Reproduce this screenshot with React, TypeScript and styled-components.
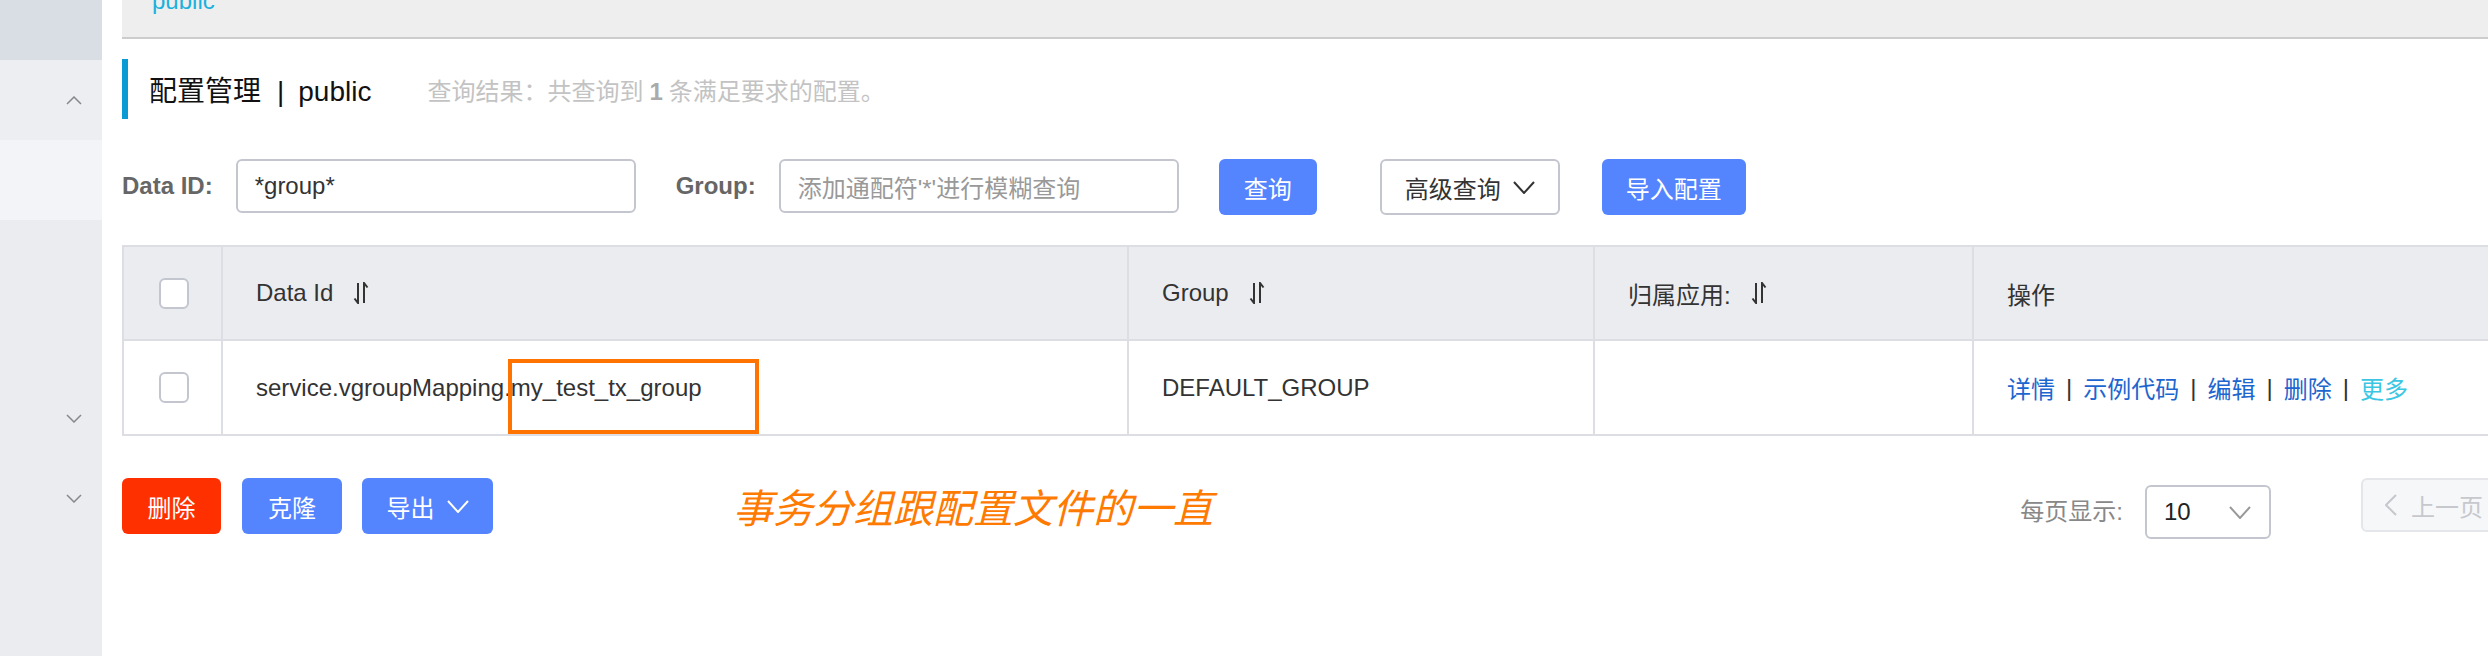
import React from 'react';
import styled, { createGlobalStyle } from 'styled-components';

const GlobalStyle = createGlobalStyle`
  html, body {
    margin: 0;
    padding: 0;
    background: #fff;
    overflow: hidden;
  }
  body {
    font-family: "Liberation Sans", "Noto Sans CJK SC", sans-serif;
    color: #333;
  }
`;

const Page = styled.div`
  display: flex;
  width: 2488px;
  height: 656px;
  overflow: hidden;
`;

const Sidebar = styled.div`
  width: 102px;
  flex-shrink: 0;
  display: flex;
  flex-direction: column;
  background: #ebecf0;
`;

const SideItem = styled.div<{ $h: number; $bg?: string }>`
  height: ${p => p.$h}px;
  background: ${p => p.$bg || 'transparent'};
  display: flex;
  align-items: center;
  justify-content: flex-end;
  padding-right: 20px;
`;

const Main = styled.div`
  width: 2727px;
  flex-shrink: 0;
  padding-left: 20px;
`;

const Crumbs = styled.div`
  height: 37px;
  background: #eeeeee;
  border-bottom: 2px solid #cccccc;
  overflow: hidden;
  padding-left: 30px;
`;

const CrumbText = styled.span`
  display: block;
  margin-top: -11px;
  font-size: 24px;
  line-height: 24px;
  color: #1bb1dc;
`;

const TitleBlock = styled.div`
  margin-top: 20px;
  height: 60px;
  border-left: 6px solid #0a9bd4;
  padding-left: 21px;
  display: flex;
  align-items: center;
`;

const Title = styled.span`
  font-size: 28px;
  color: #111;
`;

const Pipe = styled.span`
  margin: 0 14px 0 16px;
`;

const Result = styled.span`
  margin-left: 56px;
  font-size: 24px;
  color: #c3c3c3;

  b {
    color: #aaa;
    margin: 0 6px;
  }
`;

const SearchRow = styled.div`
  margin-top: 40px;
  display: flex;
  align-items: flex-start;
  height: 56px;
`;

const Label = styled.span<{ $gap?: number }>`
  margin-left: ${p => p.$gap || 0}px;
  margin-right: 23px;
  height: 54px;
  line-height: 54px;
  font-size: 24px;
  font-weight: bold;
  color: #666;
`;

const Input = styled.div<{ $placeholder?: boolean }>`
  box-sizing: border-box;
  width: 400px;
  height: 54px;
  border: 2px solid #c4c6cf;
  border-radius: 6px;
  padding: 0 17px;
  display: flex;
  align-items: center;
  font-size: 24px;
  color: ${p => (p.$placeholder ? '#999' : '#333')};
`;

const Button = styled.div<{ $kind?: 'primary' | 'normal' | 'danger'; $w: number; $gap?: number }>`
  box-sizing: border-box;
  width: ${p => p.$w}px;
  height: 56px;
  margin-left: ${p => p.$gap || 0}px;
  border-radius: 6px;
  display: flex;
  align-items: center;
  justify-content: center;
  gap: 12px;
  font-size: 24px;
  background: ${p => (p.$kind === 'danger' ? '#ff3000' : p.$kind === 'normal' ? '#fff' : '#5584ff')};
  color: ${p => (p.$kind === 'normal' ? '#333' : '#fff')};
  border: ${p => (p.$kind === 'normal' ? '2px solid #c4c6cf' : 'none')};
`;

const Table = styled.div`
  margin-top: 30px;
  display: grid;
  grid-template-columns: 99px 906px 466px 379px 875px;
  border-top: 2px solid #dcdee3;
  border-left: 2px solid #dcdee3;
`;

const Cell = styled.div<{ $head?: boolean; $center?: boolean }>`
  box-sizing: border-box;
  position: relative;
  height: ${p => (p.$head ? 94 : 95)}px;
  border-right: 2px solid #dcdee3;
  border-bottom: 2px solid #dcdee3;
  background: ${p => (p.$head ? '#ebecf0' : '#fff')};
  display: flex;
  align-items: center;
  justify-content: ${p => (p.$center ? 'center' : 'flex-start')};
  padding-left: ${p => (p.$center ? 0 : 33)}px;
  font-size: 24px;
  color: #333;
  gap: 20px;
`;

const Checkbox = styled.div`
  box-sizing: border-box;
  width: 30px;
  height: 31px;
  border: 2px solid #c4c6cf;
  border-radius: 6px;
  background: #fff;
  margin-left: 3px;
`;

const Marker = styled.div`
  position: absolute;
  left: 285px;
  top: 18px;
  width: 251px;
  height: 75px;
  box-sizing: border-box;
  border: 4px solid #ff7300;
`;

const Links = styled.div`
  display: flex;
  align-items: center;
  font-size: 24px;
`;

const Link = styled.span<{ $more?: boolean }>`
  color: ${p => (p.$more ? '#3bc6e3' : '#1d66cf')};
`;

const Sep = styled.span`
  color: #333;
  margin: 0 11px;
`;

const BottomRow = styled.div`
  margin-top: 42px;
  display: flex;
  align-items: flex-start;
`;

const Note = styled.span`
  margin-left: 240px;
  margin-top: 3px;
  font-size: 40px;
  line-height: 50px;
  font-style: italic;
  color: #ff7a00;
  font-family: "Noto Sans CJK SC", sans-serif;
`;

const Pager = styled.div`
  margin-left: auto;
  display: flex;
  align-items: flex-start;
`;

const PagerLabel = styled.span`
  margin-top: 7px;
  height: 54px;
  line-height: 54px;
  font-size: 24px;
  color: #888;
  margin-right: 22px;
`;

const Select = styled.div`
  box-sizing: border-box;
  margin-top: 7px;
  width: 126px;
  height: 54px;
  border: 2px solid #c4c6cf;
  border-radius: 6px;
  padding: 0 18px 0 17px;
  display: flex;
  align-items: center;
  justify-content: space-between;
  font-size: 24px;
  color: #222;
`;

const PageButton = styled.div<{ $w: number; $gap: number }>`
  box-sizing: border-box;
  width: ${p => p.$w}px;
  height: 54px;
  margin-left: ${p => p.$gap}px;
  border: 2px solid #e4e6ea;
  border-radius: 6px;
  background: #f6f7f9;
  display: flex;
  align-items: center;
  justify-content: flex-start;
  padding-left: 22px;
  gap: 14px;
  font-size: 24px;
  color: #c6c8cd;
`;

const Chevron: React.FC<{ dir: 'up' | 'down' | 'left' | 'right'; color?: string; w?: number; h?: number; sw?: number }> = ({
  dir,
  color = '#888',
  w = 16,
  h = 9,
  sw = 1.5,
}) => {
  const pts: Record<string, string> = {
    down: `1,1 ${w / 2},${h - 1} ${w - 1},1`,
    up: `1,${h - 1} ${w / 2},1 ${w - 1},${h - 1}`,
    left: `${w - 1},1 1,${h / 2} ${w - 1},${h - 1}`,
    right: `1,1 ${w - 1},${h / 2} 1,${h - 1}`,
  };
  return (
    <svg width={w} height={h} viewBox={`0 0 ${w} ${h}`}>
      <polyline points={pts[dir]} fill="none" stroke={color} strokeWidth={sw} />
    </svg>
  );
};

const SortIcon = () => (
  <svg width="16" height="22" viewBox="0 0 16 22">
    <path d="M5 1 V21 L1.5 16.5" fill="none" stroke="#333" strokeWidth="2" />
    <path d="M11 21 V1 L14.5 5.5" fill="none" stroke="#333" strokeWidth="2" />
  </svg>
);

const App: React.FC = () => {
  return (
    <>
      <GlobalStyle />
      <Page>
        <Sidebar>
          <SideItem $h={60} $bg="#d9dde4" />
          <SideItem $h={80} $bg="#eceef2">
            <Chevron dir="up" />
          </SideItem>
          <SideItem $h={80} $bg="#f3f4f7" />
          <SideItem $h={158} />
          <SideItem $h={80}>
            <Chevron dir="down" />
          </SideItem>
          <SideItem $h={80}>
            <Chevron dir="down" />
          </SideItem>
        </Sidebar>
        <Main>
          <Crumbs>
            <CrumbText>public</CrumbText>
          </Crumbs>
          <TitleBlock>
            <Title>
              配置管理<Pipe>|</Pipe>public
            </Title>
            <Result>
              查询结果：共查询到<b>1</b>条满足要求的配置。
            </Result>
          </TitleBlock>
          <SearchRow>
            <Label>Data ID:</Label>
            <Input>*group*</Input>
            <Label $gap={40}>Group:</Label>
            <Input $placeholder>添加通配符'*'进行模糊查询</Input>
            <Button $w={98} $gap={40}>查询</Button>
            <Button $kind="normal" $w={180} $gap={63}>
              高级查询
              <Chevron dir="down" color="#333" w={22} h={13} sw={2} />
            </Button>
            <Button $w={144} $gap={42}>导入配置</Button>
          </SearchRow>
          <Table>
            <Cell $head $center>
              <Checkbox />
            </Cell>
            <Cell $head>
              Data Id
              <SortIcon />
            </Cell>
            <Cell $head>
              Group
              <SortIcon />
            </Cell>
            <Cell $head>
              归属应用:
              <SortIcon />
            </Cell>
            <Cell $head>操作</Cell>

            <Cell $center>
              <Checkbox />
            </Cell>
            <Cell>
              service.vgroupMapping.my_test_tx_group
              <Marker />
            </Cell>
            <Cell>DEFAULT_GROUP</Cell>
            <Cell />
            <Cell>
              <Links>
                <Link>详情</Link>
                <Sep>|</Sep>
                <Link>示例代码</Link>
                <Sep>|</Sep>
                <Link>编辑</Link>
                <Sep>|</Sep>
                <Link>删除</Link>
                <Sep>|</Sep>
                <Link $more>更多</Link>
              </Links>
            </Cell>
          </Table>
          <BottomRow>
            <Button $kind="danger" $w={99}>删除</Button>
            <Button $w={100} $gap={21}>克隆</Button>
            <Button $w={131} $gap={20}>
              导出
              <Chevron dir="down" color="#fff" w={22} h={13} sw={2} />
            </Button>
            <Note>事务分组跟配置文件的一直</Note>
            <Pager>
              <PagerLabel>每页显示:</PagerLabel>
              <Select>
                10
                <Chevron dir="down" color="#999" w={22} h={13} sw={2} />
              </Select>
              <PageButton $w={200} $gap={90}>
                <Chevron dir="left" color="#c6c8cd" w={12} h={22} sw={2} />
                上一页
              </PageButton>
              <PageButton $w={56} $gap={16}>1</PageButton>
              <PageButton $w={200} $gap={16}>
                下一页
                <Chevron dir="right" color="#c6c8cd" w={12} h={22} sw={2} />
              </PageButton>
            </Pager>
          </BottomRow>
        </Main>
      </Page>
    </>
  );
};

export default App;
